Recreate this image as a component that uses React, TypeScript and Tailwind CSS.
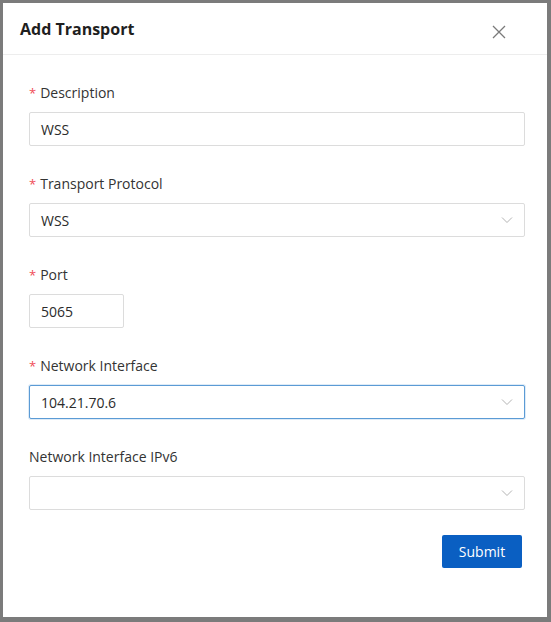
import React from "react";

const font = { fontFamily: '"Open Sans", "Noto Sans", sans-serif' };

const Chevron = () => (
  <svg width="12" height="8" viewBox="0 0 12 8" fill="none" className="shrink-0">
    <path d="M1 1.5 L6 6.5 L11 1.5" stroke="#b3b3b3" strokeWidth="1" />
  </svg>
);

const Label = ({ text, required = true }: { text: string; required?: boolean }) => (
  <div className="flex items-center h-5 text-[14px] text-[#333333] mb-[10px]">
    {required && <span className="text-[#f04d57] mr-[4px] text-[13px] leading-none mt-[2px]">*</span>}
    <span>{text}</span>
  </div>
);

const TextBox = ({ value, className = "" }: { value: string; className?: string }) => (
  <div
    className={`h-[34px] flex items-center px-[11px] border border-[#dcdcdc] rounded-[2px] bg-white text-[14px] text-[#2b2b2b] ${className}`}
  >
    {value}
  </div>
);

const SelectBox = ({ value, focused = false }: { value: string; focused?: boolean }) => (
  <div
    className={`h-[34px] flex items-center justify-between pl-[11px] pr-[11px] rounded-[2px] bg-white text-[14px] text-[#2b2b2b] ${
      focused
        ? "border border-[#5b9bd5] shadow-[0_0_0_1px_rgba(91,155,213,0.2)]"
        : "border border-[#dcdcdc]"
    }`}
  >
    <span>{value}</span>
    <Chevron />
  </div>
);

export default function App() {
  return (
    <div className="w-[551px] h-[622px] bg-[#7b7b7b] pl-[3px] pt-[3px] pr-[4px] pb-[5px]" style={font}>
      <div className="w-full h-full bg-white flex flex-col">
        <div className="h-[52px] flex items-center justify-between pl-[17px] pr-[41px] border-b border-[#ededed]">
          <h2 className="text-[16px] font-bold text-[#1f1f1f] mt-[1px]">Add Transport</h2>
          <svg width="14" height="14" viewBox="0 0 14 14" className="mt-[6px]">
            <path d="M1 1 L13 13 M13 1 L1 13" stroke="#7a7a7a" strokeWidth="1.3" />
          </svg>
        </div>

        <div className="pl-[26px] pr-[22px] pt-[27px] flex flex-col">
          <Label text="Description" />
          <TextBox value="WSS" />

          <div className="mt-[27px]">
            <Label text="Transport Protocol" />
            <SelectBox value="WSS" />
          </div>

          <div className="mt-[27px]">
            <Label text="Port" />
            <TextBox value="5065" className="w-[95px]" />
          </div>

          <div className="mt-[27px]">
            <Label text="Network Interface" />
            <SelectBox value="104.21.70.6" focused />
          </div>

          <div className="mt-[27px]">
            <Label text="Network Interface IPv6" required={false} />
            <SelectBox value="" />
          </div>

          <div className="flex justify-end mt-[25px] pr-[3px]">
            <button className="w-[80px] h-[33px] bg-[#0a5fc2] text-white text-[14px] rounded-[2px] flex items-center justify-center">
              Submit
            </button>
          </div>
        </div>
      </div>
    </div>
  );
}
